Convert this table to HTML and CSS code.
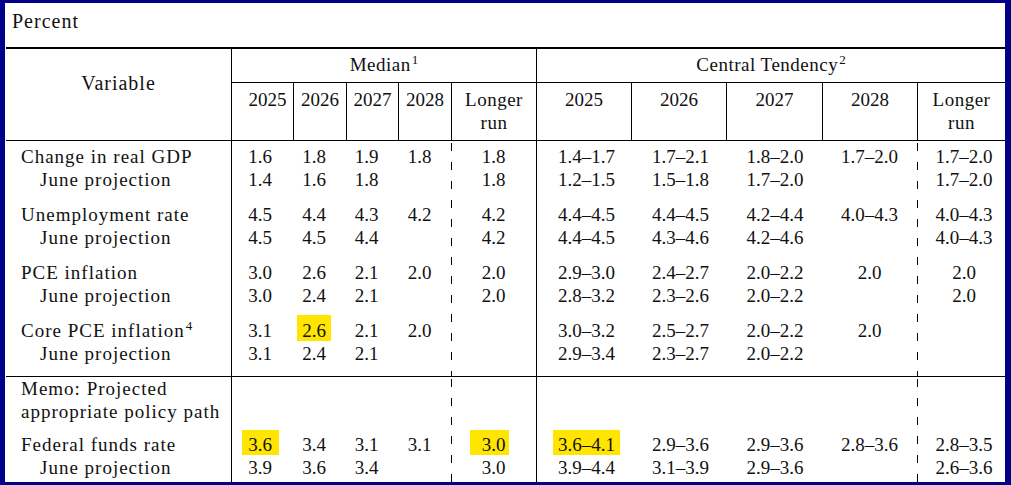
FILE: index.html
```html
<!DOCTYPE html>
<html lang="en">
<head>
<meta charset="utf-8">
<title>Economic projections</title>
<link rel="stylesheet" href="styles.css">
</head>
<body>
<div class="frame">
  <div class="percent">Percent</div>

  <div class="head">
    <div class="h-var">Variable</div>
    <div class="h-group h-median">Median<sup>1</sup></div>
    <div class="h-group h-central">Central Tendency<sup>2</sup></div>
    <div class="h-year h-first">2025</div>
    <div class="h-year">2026</div>
    <div class="h-year">2027</div>
    <div class="h-year">2028</div>
    <div class="h-year h-word">Longer<br>run</div>
    <div class="h-year">2025</div>
    <div class="h-year">2026</div>
    <div class="h-year">2027</div>
    <div class="h-year">2028</div>
    <div class="h-year h-word">Longer<br>run</div>
  </div>

  <div class="section s-main">
    <div class="group">
      <div class="row">
        <div class="lbl">Change in real GDP</div>
        <div>1.6</div><div>1.8</div><div>1.9</div><div>1.8</div><div>1.8</div>
        <div>1.4–1.7</div><div>1.7–2.1</div><div>1.8–2.0</div><div>1.7–2.0</div><div>1.7–2.0</div>
      </div>
      <div class="row">
        <div class="lbl sub">June projection</div>
        <div>1.4</div><div>1.6</div><div>1.8</div><div></div><div>1.8</div>
        <div>1.2–1.5</div><div>1.5–1.8</div><div>1.7–2.0</div><div></div><div>1.7–2.0</div>
      </div>
    </div>
    <div class="group">
      <div class="row">
        <div class="lbl">Unemployment rate</div>
        <div>4.5</div><div>4.4</div><div>4.3</div><div>4.2</div><div>4.2</div>
        <div>4.4–4.5</div><div>4.4–4.5</div><div>4.2–4.4</div><div>4.0–4.3</div><div>4.0–4.3</div>
      </div>
      <div class="row">
        <div class="lbl sub">June projection</div>
        <div>4.5</div><div>4.5</div><div>4.4</div><div></div><div>4.2</div>
        <div>4.4–4.5</div><div>4.3–4.6</div><div>4.2–4.6</div><div></div><div>4.0–4.3</div>
      </div>
    </div>
    <div class="group">
      <div class="row">
        <div class="lbl">PCE inflation</div>
        <div>3.0</div><div>2.6</div><div>2.1</div><div>2.0</div><div>2.0</div>
        <div>2.9–3.0</div><div>2.4–2.7</div><div>2.0–2.2</div><div>2.0</div><div>2.0</div>
      </div>
      <div class="row">
        <div class="lbl sub">June projection</div>
        <div>3.0</div><div>2.4</div><div>2.1</div><div></div><div>2.0</div>
        <div>2.8–3.2</div><div>2.3–2.6</div><div>2.0–2.2</div><div></div><div>2.0</div>
      </div>
    </div>
    <div class="group">
      <div class="row">
        <div class="lbl">Core PCE inflation<sup>4</sup></div>
        <div>3.1</div><div><span class="hl hl-t">2.6</span></div><div>2.1</div><div>2.0</div><div></div>
        <div>3.0–3.2</div><div>2.5–2.7</div><div>2.0–2.2</div><div>2.0</div><div></div>
      </div>
      <div class="row">
        <div class="lbl sub">June projection</div>
        <div>3.1</div><div>2.4</div><div>2.1</div><div></div><div></div>
        <div>2.9–3.4</div><div>2.3–2.7</div><div>2.0–2.2</div><div></div><div></div>
      </div>
    </div>
  </div>

  <div class="section s-memo">
    <div class="group">
      <div class="row">
        <div class="lbl">Memo: Projected</div>
        <div></div><div></div><div></div><div></div><div></div>
        <div></div><div></div><div></div><div></div><div></div>
      </div>
      <div class="row">
        <div class="lbl">appropriate policy path</div>
        <div></div><div></div><div></div><div></div><div></div>
        <div></div><div></div><div></div><div></div><div></div>
      </div>
    </div>
    <div class="group">
      <div class="row">
        <div class="lbl">Federal funds rate</div>
        <div><span class="hl hl-w">3.6</span></div><div>3.4</div><div>3.1</div><div>3.1</div><div><span class="hl hl-lr">3.0</span></div>
        <div><span class="hl">3.6–4.1</span></div><div>2.9–3.6</div><div>2.9–3.6</div><div>2.8–3.6</div><div>2.8–3.5</div>
      </div>
      <div class="row">
        <div class="lbl sub">June projection</div>
        <div>3.9</div><div>3.6</div><div>3.4</div><div></div><div>3.0</div>
        <div>3.9–4.4</div><div>3.1–3.9</div><div>2.9–3.6</div><div></div><div>2.6–3.6</div>
      </div>
    </div>
  </div>
</div>
</body>
</html>
```

FILE: styles.css
```css
:root {
  --cols: 225px 62px 53px 52px 53px 85px 95px 95px 96px 95px 88px;
  --ink: #111;
  --rule: #000;
}

* { box-sizing: border-box; }

html, body {
  margin: 0;
  padding: 0;
  background: #fff;
}

body {
  font-family: "Liberation Serif", "Times New Roman", serif;
  font-size: 19px;
  color: var(--ink);
}

.frame {
  width: 1011px;
  height: 485px;
  border-style: solid;
  border-color: #00008b;
  border-width: 3px 6px 3px 5px;
  display: flex;
  flex-direction: column;
  overflow: hidden;
}

.percent {
  height: 44px;
  padding: 7px 0 0 7px;
  font-size: 20px;
  line-height: 23px;
  letter-spacing: 1px;
}

sup {
  font-size: 13px;
  line-height: 0;
  vertical-align: 7px;
  letter-spacing: 0;
  margin-left: 1px;
}

/* ---------- header ---------- */
.head {
  margin-left: 1px;
  width: 999px;
  display: grid;
  grid-template-columns: var(--cols);
  grid-template-rows: 34px 57px;
  border-top: 2px solid var(--rule);
  border-bottom: 1px solid var(--rule);
  line-height: 23px;
}

.h-var {
  grid-column: 1;
  grid-row: 1 / 3;
  text-align: center;
  padding-top: 23px;
  font-size: 20px;
  letter-spacing: 1px;
}

.h-group {
  grid-row: 1;
  border-left: 1px solid var(--rule);
  border-bottom: 1px solid var(--rule);
  text-align: center;
  padding-top: 4px;
  letter-spacing: 0.5px;
}

.h-median { grid-column: 2 / 7; }
.h-central { grid-column: 7 / 12; }

.h-year {
  border-left: 1px solid var(--rule);
  text-align: center;
  padding-top: 5px;
}

.h-first { padding-left: 10px; }
.h-word { letter-spacing: 0.5px; }

/* ---------- body ---------- */
.section {
  margin-left: 1px;
  width: 999px;
  background:
    linear-gradient(var(--rule), var(--rule)) 225px 0 / 1px 100% no-repeat,
    linear-gradient(var(--rule), var(--rule)) 530px 0 / 1px 100% no-repeat,
    repeating-linear-gradient(to bottom, transparent 0 2px, var(--rule) 2px 10px, transparent 10px 19px) 445px 0 / 1px 100% no-repeat,
    repeating-linear-gradient(to bottom, transparent 0 2px, var(--rule) 2px 10px, transparent 10px 19px) 911px 0 / 1px 100% no-repeat;
}

.s-main {
  padding: 4px 0 11px;
  border-bottom: 1px solid var(--rule);
}

.s-main .group + .group { margin-top: 12px; }

.s-memo { flex: 1; }
.s-memo .group + .group { margin-top: 10px; }

.row {
  display: grid;
  grid-template-columns: var(--cols);
  height: 23px;
  line-height: 23px;
}

.row > div {
  text-align: center;
  white-space: nowrap;
}

.row > :nth-child(2) { padding-right: 4px; }
.row > :nth-child(3),
.row > :nth-child(4) { padding-right: 11px; }
.row > :nth-child(5) { padding-right: 10px; }
.row > :nth-child(7) { padding-left: 6px; }
.row > :nth-child(8) { padding-left: 4px; }
.row > :nth-child(9) { padding-left: 2px; }
.row > :nth-child(11) { padding-left: 6px; }

.row > .lbl {
  text-align: left;
  padding-left: 15px;
  letter-spacing: 1px;
}

.row > .lbl.sub { padding-left: 34px; }

/* ---------- highlights ---------- */
.hl {
  background: #ffe500;
  padding: 4px 5px 0;
  margin: 0 -5px;
}

.hl-t { padding-top: 5px; }

.hl-w {
  padding: 4px 7px 0 6px;
  margin: 0 -7px 0 -6px;
}

.hl-lr {
  padding: 4px 4px 0 12px;
  margin: 0 -4px 0 -12px;
}
```
